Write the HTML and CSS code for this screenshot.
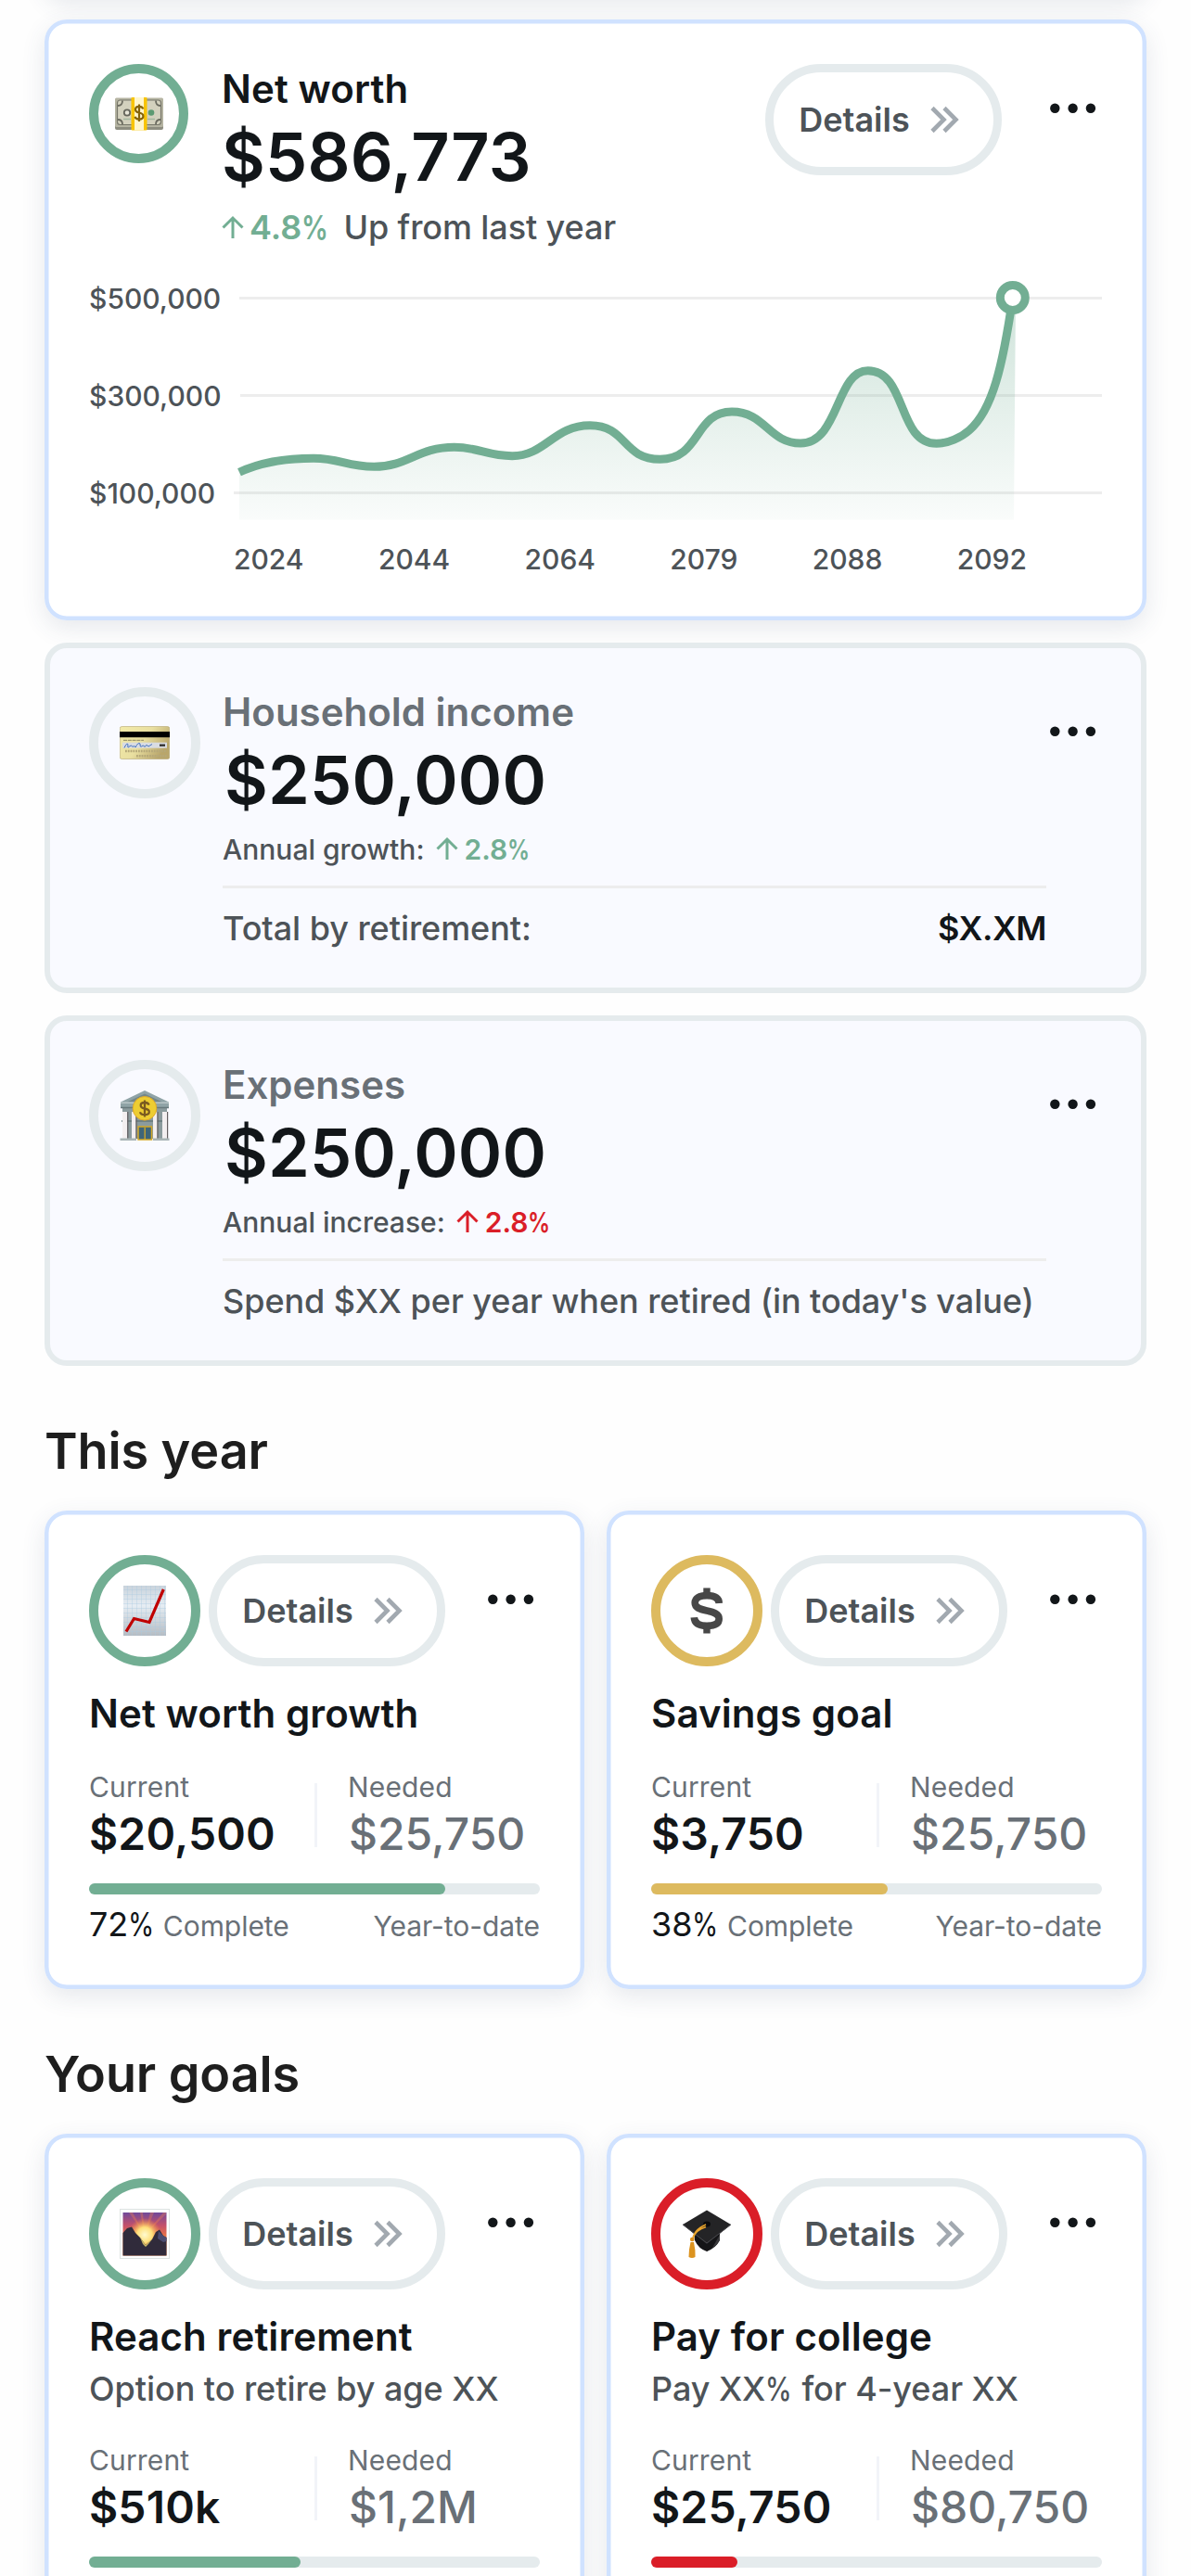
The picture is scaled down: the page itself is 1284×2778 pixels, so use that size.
FILE: index.html
```
<!DOCTYPE html>
<html lang="en">
<head>
    <meta charset="UTF-8" />
    <meta name="viewport" content="width=device-width, initial-scale=1.0" />
    <title>Financial Overview</title>
    <link rel="stylesheet" href="styles.css">
</head>
<body>

    <!-- shared icons -->
    <svg class="sprite" aria-hidden="true">
        <symbol id="dots" viewBox="0 0 60 96">
            <circle cx="9.3" cy="47.7" r="5.2" />
            <circle cx="28.6" cy="47.7" r="5.2" />
            <circle cx="47.9" cy="47.7" r="5.2" />
        </symbol>
        <symbol id="chevrons" viewBox="0 0 32 30">
            <path d="M3 2.5 L15.5 15 L3 27.5 M16 2.5 L28.5 15 L16 27.5" fill="none" stroke="#a2a9b0" stroke-width="4.6" />
        </symbol>
        <symbol id="arrow" viewBox="0 0 24 26">
            <path d="M12 25 V3 M1.5 13.5 L12 3 L22.5 13.5" fill="none" stroke="currentColor" stroke-width="3" />
        </symbol>
    </svg>

    <main class="page">
        <section class="card card-previous"></section>

        <section class="card card-networth">
            <div class="card-row">
                <div class="icon icon-small green">
                    <svg width="54" height="36" viewBox="0 0 54 36">
                        <rect x="1" y="2" width="52" height="33" rx="2" fill="#8d8d80" />
                        <rect x="1" y="0.5" width="52" height="31.5" rx="1.5" fill="#b5b4a2" />
                        <rect x="3.5" y="3" width="47" height="26.5" rx="3" fill="#d3d1be" stroke="#77776a" stroke-width="1.2" />
                        <path d="M4 9 Q9 9 9 3.5 M50 9 Q45 9 45 3.5 M4 24 Q9 24 9 29 M50 24 Q45 24 45 29" fill="none" stroke="#6b6b60" stroke-width="1.8" />
                        <circle cx="14" cy="16.5" r="3.2" fill="#e8e6d8" stroke="#66665c" stroke-width="1.8" />
                        <circle cx="40" cy="16.5" r="3.3" fill="#5c9a72" />
                        <path d="M10 23.5 h8 M36 23.5 h8" stroke="#a5b8a0" stroke-width="1.6" />
                        <rect x="18.5" y="0" width="17" height="35.5" rx="1" fill="#f8c400" />
                        <rect x="22" y="0" width="10" height="35.5" fill="#fff6cc" />
                        <path d="M31.3 12.5 Q30.5 9.8 27 9.8 Q23 9.8 23 13 Q23 15.8 27 16.5 Q31.4 17.3 31.4 20.3 Q31.4 23.6 27 23.6 Q23.2 23.6 22.6 20.7 M27 7.5 V26" fill="none" stroke="#85640b" stroke-width="2.2" />
                    </svg>
                </div>
                <div class="card-text">
                    <h3 class="title">Net worth</h3>
                    <div class="amount">$586,773</div>
                    <div class="trend"><svg class="arrow green-text" width="24" height="26"><use href="#arrow" /></svg><b class="green-text">4.8<span class="pct">%</span></b> <span class="trend-note">Up from last year</span></div>
                </div>
                <button class="details">Details <svg width="32" height="30"><use href="#chevrons" /></svg></button>
                <svg class="dots" width="60" height="96"><use href="#dots" /></svg>
            </div>

            <div class="chart">
                <div class="chart-line"><span>$500,000</span></div>
                <div class="chart-line"><span>$300,000</span></div>
                <div class="chart-line"><span>$100,000</span></div>
                <svg class="chart-plot" width="1092" height="288" viewBox="96 299 1092 288">
                    <defs>
                        <linearGradient id="fade" x1="0" y1="321" x2="0" y2="575" gradientUnits="userSpaceOnUse">
                            <stop offset="0" stop-color="#72ae93" stop-opacity="0.34" />
                            <stop offset="1" stop-color="#72ae93" stop-opacity="0.02" />
                        </linearGradient>
                    </defs>
                    <path fill="url(#fade)" d="M258 509.3 C282 498 310 494.3 338 494.3 C367 494.3 373 503.3 403.3 503.3 C440 503.3 450 482.3 489.8 482.3 C516 482.3 525 491.7 552.2 491.7 C588 491.7 597 458.7 636 458.7 C676 458.7 671 495.3 711.5 495.3 C756 495.3 748 444 789 444 C825 444 829 478 863 478 C905 478 901 399.7 935.7 399.7 C978 399.7 967 478.3 1009.6 478.3 C1022 478.3 1036 472 1045 464 C1070 442 1081 395 1091.8 321 H1095 L1093 560.5 H258 Z" />
                    <path fill="none" stroke="#72ae93" stroke-width="9" d="M258 509.3 C282 498 310 494.3 338 494.3 C367 494.3 373 503.3 403.3 503.3 C440 503.3 450 482.3 489.8 482.3 C516 482.3 525 491.7 552.2 491.7 C588 491.7 597 458.7 636 458.7 C676 458.7 671 495.3 711.5 495.3 C756 495.3 748 444 789 444 C825 444 829 478 863 478 C905 478 901 399.7 935.7 399.7 C978 399.7 967 478.3 1009.6 478.3 C1022 478.3 1036 472 1045 464 C1070 442 1081 395 1091.8 321" />
                    <circle cx="1091.8" cy="321" r="13.5" fill="#fff" stroke="#72ae93" stroke-width="9" />
                </svg>
                <div class="years">
                    <span>2024</span>
                    <span>2044</span>
                    <span>2064</span>
                    <span>2079</span>
                    <span>2088</span>
                    <span>2092</span>
                </div>
            </div>
        </section>

        <section class="card muted">
            <div class="card-row">
                <div class="icon grey">
                    <svg width="54" height="36" viewBox="0 0 54 36">
                        <defs>
                            <linearGradient id="gold" x1="0" y1="0" x2="1" y2="0.5">
                                <stop offset="0" stop-color="#f3eba9" />
                                <stop offset="0.55" stop-color="#e9dfa0" />
                                <stop offset="1" stop-color="#b9a66b" />
                            </linearGradient>
                        </defs>
                        <rect x="0.3" y="0.5" width="53.4" height="35" rx="2" fill="url(#gold)" stroke="#b3a56d" stroke-width="0.6" />
                        <rect x="0" y="6" width="54" height="6.2" fill="#000" />
                        <path d="M4 15.3 h22" stroke="#8e8761" stroke-width="1" stroke-dasharray="4 0.8" />
                        <rect x="3" y="17.7" width="48" height="6" fill="#d9dce2" />
                        <path d="M5 23.5 Q8 17 9 20 Q8 25 11 21.5 Q13 20 14 22.5 Q16 20 17 23 Q20 17 22 19 Q22 24 24 21.5 Q26 20 27 22.5 Q29 19 31 22 L35 19.5" fill="none" stroke="#4472c0" stroke-width="1" />
                        <path d="M43 20.7 h6" stroke="#333" stroke-width="2.4" />
                        <path d="M6 27 h45 M18 32.3 h33" stroke="#b5a878" stroke-width="2.6" stroke-dasharray="1.8 1" />
                    </svg>
                </div>
                <div class="card-text">
                    <h3 class="title">Household income</h3>
                    <div class="amount shifted">$250,000</div>
                    <div class="annual">Annual growth: <span class="rate green-text"><svg class="arrow" width="24" height="26"><use href="#arrow" /></svg>2.8<span class="pct">%</span></span></div>
                    <div class="summary"><span>Total by retirement:</span><strong>$X.XM</strong></div>
                </div>
                <svg class="dots" width="60" height="96"><use href="#dots" /></svg>
            </div>
        </section>

        <section class="card muted">
            <div class="card-row">
                <div class="icon grey">
                    <svg width="54" height="54" viewBox="0 0 54 54">
                        <rect x="3" y="14" width="48" height="38" fill="#8b9b9d" />
                        <path d="M27 0 L53 12.5 V18 H1 V12.5 Z" fill="#8fa3a6" />
                        <path d="M27 3.5 L46 12.5 H8 Z" fill="#748789" />
                        <path d="M1 13.2 H53" stroke="#b9c6c7" stroke-width="1.5" />
                        <path d="M1 18.5 H53 M2 33 H52" stroke="#67797b" stroke-width="1.5" />
                        <rect x="3" y="23" width="5" height="29" fill="#f3eff0" />
                        <rect x="13" y="23" width="4.5" height="29" fill="#f3eff0" />
                        <rect x="36" y="23" width="4.5" height="29" fill="#f3eff0" />
                        <rect x="46" y="23" width="5" height="29" fill="#f3eff0" />
                        <path d="M8.8 23 V52 M18 23 V52 M41 23 V52 M51.6 23 V52" stroke="#655f61" stroke-width="1.2" />
                        <rect x="20" y="39" width="14.5" height="14" fill="#3f6578" stroke="#d5a927" stroke-width="1.5" />
                        <path d="M27.2 40 V53" stroke="#d5a927" stroke-width="1.3" />
                        <path d="M0.5 52.8 H18 M36 52.8 H53.5" stroke="#a9b5b5" stroke-width="2.4" />
                        <circle cx="27" cy="19.3" r="12.8" fill="#edcd32" stroke="#e0aa28" stroke-width="1" />
                        <path d="M31.6 15.6 Q30.8 13 27 13 Q22.7 13 22.7 16 Q22.7 18.7 27 19.5 Q31.8 20.3 31.8 23 Q31.8 26.2 27 26.2 Q22.8 26.2 22 23.2 M27 10.5 V28.5" fill="none" stroke="#7a5a20" stroke-width="2.3" />
                    </svg>
                </div>
                <div class="card-text">
                    <h3 class="title">Expenses</h3>
                    <div class="amount shifted">$250,000</div>
                    <div class="annual">Annual increase: <span class="rate red-text"><svg class="arrow" width="24" height="26"><use href="#arrow" /></svg>2.8<span class="pct">%</span></span></div>
                    <div class="summary"><span>Spend $XX per year when retired (in today's value)</span></div>
                </div>
                <svg class="dots" width="60" height="96"><use href="#dots" /></svg>
            </div>
        </section>

        <h2>This year</h2>
        <div class="grid">
            <section class="card">
                <div class="card-row">
                    <div class="icon green">
                        <svg width="46" height="54" viewBox="0 0 46 54">
                            <defs>
                                <linearGradient id="paper" x1="0" y1="0" x2="0" y2="1">
                                    <stop offset="0" stop-color="#c9d3dc" />
                                    <stop offset="0.4" stop-color="#e6edf3" />
                                    <stop offset="1" stop-color="#b5bcc3" />
                                </linearGradient>
                                <pattern id="lines" width="5" height="5" patternUnits="userSpaceOnUse">
                                    <path d="M5 0 V5 H0" fill="none" stroke="#a9c8e0" stroke-width="0.7" />
                                </pattern>
                            </defs>
                            <rect width="46" height="54" fill="url(#paper)" />
                            <rect width="46" height="54" fill="url(#lines)" />
                            <path d="M3 49.5 L11.5 35.5 L28 39.5 L43.3 4" fill="none" stroke="#c00000" stroke-width="3.2" />
                        </svg>
                    </div>
                    <button class="details">Details <svg width="32" height="30"><use href="#chevrons" /></svg></button>
                    <svg class="dots" width="60" height="96"><use href="#dots" /></svg>
                </div>
                <h3 class="title">Net worth growth</h3>
                <div class="stats">
                    <div class="stat"><span>Current</span><b>$20,500</b></div>
                    <div class="stat needed"><span>Needed</span><b>$25,750</b></div>
                </div>
                <div class="bar"><div class="bar-fill green-bg" style="width: 79%"></div></div>
                <div class="progress-text"><span><b>72<span class="pct">%</span></b> Complete</span><span>Year-to-date</span></div>
            </section>

            <section class="card">
                <div class="card-row">
                    <div class="icon yellow">
                        <svg width="36" height="50" viewBox="0 0 36 50">
                            <path d="M31.3 17 C31 11.3 26 8.6 18 8.6 C10 8.6 5.2 11.8 5.2 16.6 C5.2 21.7 10 23.3 18 25 C26 26.6 31.2 28.7 31.2 33.8 C31.2 39 26 41.4 18 41.4 C9.6 41.4 4.7 38.3 4.3 32.3" fill="none" stroke="#474747" stroke-width="7.6" />
                            <path d="M18 0.5 V9 M18 41 V49.5" stroke="#474747" stroke-width="7.4" />
                        </svg>
                    </div>
                    <button class="details">Details <svg width="32" height="30"><use href="#chevrons" /></svg></button>
                    <svg class="dots" width="60" height="96"><use href="#dots" /></svg>
                </div>
                <h3 class="title">Savings goal</h3>
                <div class="stats">
                    <div class="stat"><span>Current</span><b>$3,750</b></div>
                    <div class="stat needed"><span>Needed</span><b>$25,750</b></div>
                </div>
                <div class="bar"><div class="bar-fill yellow-bg" style="width: 52.5%"></div></div>
                <div class="progress-text"><span><b>38<span class="pct">%</span></b> Complete</span><span>Year-to-date</span></div>
            </section>
        </div>

        <h2>Your goals</h2>
        <div class="grid">
            <section class="card">
                <div class="card-row">
                    <div class="icon green">
                        <svg width="54" height="54" viewBox="0 0 54 54">
                            <defs>
                                <linearGradient id="sky" x1="0" y1="0" x2="0" y2="1">
                                    <stop offset="0" stop-color="#70489a" />
                                    <stop offset="0.3" stop-color="#c4506a" />
                                    <stop offset="0.6" stop-color="#ef7a3c" />
                                </linearGradient>
                                <radialGradient id="sun">
                                    <stop offset="0" stop-color="#fffbd0" />
                                    <stop offset="0.45" stop-color="#ffe07a" />
                                    <stop offset="1" stop-color="#f5903c" stop-opacity="0" />
                                </radialGradient>
                            </defs>
                            <rect x="0.5" y="0.5" width="53" height="53" fill="#fff" stroke="#dde3e2" />
                            <rect x="3.5" y="4" width="47" height="46.5" fill="url(#sky)" />
                            <path d="M27 28 L10 4 H14 Z M27 28 L22 4 H25 Z M27 28 L33 4 H37 Z M27 28 L47 4 H50 V6 Z" fill="#f7824a" opacity="0.35" />
                            <circle cx="27" cy="28" r="18" fill="url(#sun)" />
                            <path d="M3.5 26 L8 21 L13 19.5 L17 26 L22 31 L28 39 L35 33 L39 25 L43 22.5 L47 29 L50.5 31 V50.5 H3.5 Z" fill="#302b3b" />
                            <path d="M22 31 L28 39 L35 33 L31 38 L28 41 L25 38 Z" fill="#c9b766" />
                            <path d="M42 24 L41 32 L47 36 L50.5 35 V31 L47 29 Z" fill="#4a4c70" />
                        </svg>
                    </div>
                    <button class="details">Details <svg width="32" height="30"><use href="#chevrons" /></svg></button>
                    <svg class="dots" width="60" height="96"><use href="#dots" /></svg>
                </div>
                <h3 class="title">Reach retirement</h3>
                <p class="subtitle">Option to retire by age XX</p>
                <div class="stats">
                    <div class="stat"><span>Current</span><b>$510k</b></div>
                    <div class="stat needed"><span>Needed</span><b>$1,2M</b></div>
                </div>
                <div class="bar"><div class="bar-fill green-bg" style="width: 46.9%"></div></div>
            </section>

            <section class="card">
                <div class="card-row">
                    <div class="icon red">
                        <svg width="54" height="54" viewBox="0 0 54 54">
                            <path d="M13 25 H41 V34 Q37 42 27 46 Q18 43 14 34 Z" fill="#151517" />
                            <path d="M33 42 Q39 38 41 33 V28 Z" fill="#3a3a3d" />
                            <path d="M27 1.5 L53 17 L27 38 L1 17 Z" fill="#242426" />
                            <path d="M1 17 L27 37 L53 17" fill="none" stroke="#4a4a4e" stroke-width="1" />
                            <ellipse cx="27" cy="16.5" rx="4" ry="3" fill="#0b0b0c" />
                            <path d="M26 17 Q12 23 11.5 35 M26 19.5 Q15 23 12.5 31" fill="none" stroke="#eaa52c" stroke-width="1.6" />
                            <circle cx="11.2" cy="33" r="2.3" fill="#d98f1c" />
                            <path d="M9.5 36 H13 Q15 45 14.5 52 Q11 54 7.5 52 Q7.5 44 9.5 36 Z" fill="#dc931f" />
                        </svg>
                    </div>
                    <button class="details">Details <svg width="32" height="30"><use href="#chevrons" /></svg></button>
                    <svg class="dots" width="60" height="96"><use href="#dots" /></svg>
                </div>
                <h3 class="title">Pay for college</h3>
                <p class="subtitle">Pay XX<span class="pct">%</span> for 4-year XX</p>
                <div class="stats">
                    <div class="stat"><span>Current</span><b>$25,750</b></div>
                    <div class="stat needed"><span>Needed</span><b>$80,750</b></div>
                </div>
                <div class="bar"><div class="bar-fill red-bg" style="width: 19.1%"></div></div>
            </section>
        </div>
    </main>

</body>
</html>
```
FILE: styles.css
```
* {
    box-sizing: border-box;
}

body {
    margin: 0;
    height: 2778px;
    overflow: hidden;
    background: #fefefe;
    color: #121619;
    font-family: Inter, "Liberation Sans", sans-serif;
}

h2, h3, p {
    margin: 0;
}

.sprite {
    display: block;
    width: 0;
    height: 0;
}

.page {
    display: flex;
    flex-direction: column;
    gap: 24px;
    padding: 0 48px;
}

h2 {
    margin: 30px 0 3px;
    height: 75px;
    line-height: 75px;
    font-size: 54px;
    font-weight: 600;
    letter-spacing: -0.1px;
    color: #1e1e1e;
}

.card {
    padding: 48px;
    background: #fff;
    border-radius: 24px;
    box-shadow: inset 0 0 0 4.5px #d0e2ff, 0 8px 26px rgba(60, 75, 110, 0.12);
}

.card-previous {
    height: 100px;
    margin-top: -103px; /* scrolled out of view, only its shadow shows */
}

.card-networth {
    height: 648px;
}

.card.muted {
    height: 378px;
    background: #f9faff;
    box-shadow: inset 0 0 0 6px #e5ebed;
}

.card-row {
    display: flex;
    align-items: flex-start;
}

.card-text {
    flex: 1;
    margin-left: 24px;
}

/* round icons */
.icon {
    display: flex;
    align-items: center;
    justify-content: center;
    flex: none;
    width: 120px;
    height: 120px;
    border: 10px solid;
    border-radius: 50%;
}

.icon-small {
    width: 107px;
    height: 107px;
    margin-right: 12px;
}

.green { border-color: #72ae93; }
.grey { border-color: #e5ebed; }
.yellow { border-color: #ddba5f; }
.red { border-color: #da1e28; }

.green-text { color: #72ae93; }
.red-text { color: #da1e28; }

.green-bg { background: #72ae93; }
.yellow-bg { background: #ddba5f; }
.red-bg { background: #da1e28; }

.title {
    height: 54px;
    line-height: 54px;
    font-size: 42px;
    font-weight: 600;
    letter-spacing: 0.1px;
}

.muted .title {
    color: #697077;
    letter-spacing: 0;
}

.amount {
    height: 92px;
    line-height: 92px;
    font-size: 72px;
    font-weight: 600;
    letter-spacing: 0.15px;
}

.amount.shifted {
    padding-left: 2px;
}

/* narrow percent sign */
.pct {
    display: inline-block;
    margin-right: -0.17em;
    transform: scaleX(0.8);
    transform-origin: left;
}

.trend {
    display: flex;
    align-items: center;
    margin-top: 3px;
    height: 54px;
    font-size: 36px;
}

.trend b {
    margin-left: 6px;
    font-weight: 600;
}

.trend-note {
    margin-left: 15px;
    font-weight: 500;
    letter-spacing: -0.1px;
    color: #4d5358;
}

.annual {
    display: flex;
    margin-top: 7px;
    height: 45px;
    line-height: 45px;
    font-size: 30px;
    font-weight: 500;
    color: #4d5358;
}

.rate {
    display: flex;
    align-items: center;
    margin-left: 12px;
    font-weight: 600;
}

.rate .arrow {
    margin: 0 7px 3px 0;
}

.summary {
    display: flex;
    justify-content: space-between;
    margin-top: 16px;
    padding-top: 16px;
    border-top: 3px solid #ededed;
    line-height: 54px;
    font-size: 36px;
    font-weight: 500;
    letter-spacing: -0.05px;
    color: #4d5358;
}

.summary strong {
    font-weight: 600;
    letter-spacing: -0.5px;
    color: #121619;
}

.details {
    display: flex;
    align-items: center;
    justify-content: center;
    gap: 21px;
    flex: none;
    width: 255px;
    height: 120px;
    padding: 0 10px 1px 0;
    border: 9px solid #e5ebed;
    border-radius: 60px;
    background: #fff;
    color: #4d5358;
    font-family: inherit;
    font-size: 36px;
    font-weight: 600;
}

.icon + .details {
    margin-left: 9px;
}

.card-text + .details {
    margin-right: 48px;
}

.dots {
    flex: none;
    margin-left: auto;
    fill: #121619;
}

/* chart */
.chart {
    position: relative;
    margin-top: 27px;
    color: #4d5358;
    font-size: 30px;
    font-weight: 500;
}

.chart-line {
    display: flex;
    align-items: center;
    gap: 20px;
    height: 45px;
    margin-bottom: 60px;
}

.chart-line::after {
    content: "";
    flex: 1;
    height: 3px;
    background: #ededed;
}

.chart-plot {
    position: absolute;
    top: 0;
    left: 0;
}

.years {
    display: flex;
    justify-content: space-between;
    width: 855px;
    margin: -33px 0 0 156px;
    line-height: 45px;
}

/* small cards */
.grid {
    display: grid;
    grid-template-columns: 1fr 1fr;
    gap: 24px;
}

.grid .card {
    height: 516px;
}

.grid .title {
    margin-top: 24px;
}

.subtitle {
    margin: 2px 0 -2px;
    line-height: 54px;
    font-size: 36px;
    font-weight: 500;
    letter-spacing: -0.05px;
    color: #4d5358;
}

.stats {
    position: relative;
    display: grid;
    grid-template-columns: 1fr 1fr;
    margin-top: 30px;
}

.stats::before {
    content: "";
    position: absolute;
    top: 18px;
    left: 50%;
    width: 3px;
    height: 69px;
    background: #f2f4f8;
}

.stat span {
    display: block;
    line-height: 44px;
    font-size: 30px;
    font-weight: 400;
    letter-spacing: 0.15px;
    color: #697077;
}

.stat b {
    display: block;
    line-height: 58px;
    font-size: 48px;
    font-weight: 600;
    letter-spacing: 0.15px;
}

.stat.needed {
    padding-left: 36px;
}

.stat.needed b {
    padding-left: 1px;
    font-weight: 500;
    letter-spacing: 0;
    color: #697077;
}

.bar {
    height: 12px;
    margin-top: 24px;
    border-radius: 6px;
    background: #e5ebed;
}

.bar-fill {
    height: 12px;
    border-radius: 6px;
}

.progress-text {
    display: flex;
    justify-content: space-between;
    align-items: baseline;
    margin-top: 5px;
    line-height: 54px;
    font-size: 30px;
    letter-spacing: -0.05px;
    color: #697077;
}

.progress-text b {
    font-size: 36px;
    font-weight: 400;
    color: #121619;
}
```
